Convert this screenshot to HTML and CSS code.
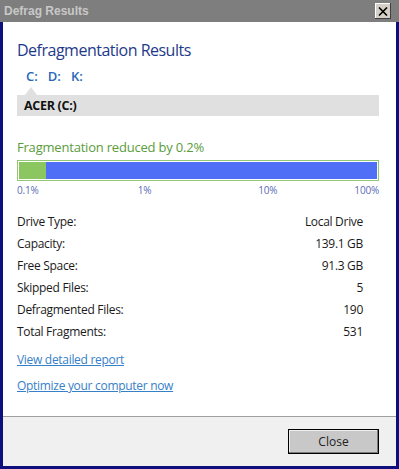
FILE: index.html
```html
<!DOCTYPE html>
<html>
<head>
<meta charset="utf-8">
<link rel="stylesheet" href="styles.css">
</head>
<body>
<div class="window">
  <div class="titlebar">
    <span class="title">Defrag Results</span>
    <span class="xbtn"><svg width="10" height="9" viewBox="0 0 10 9"><path d="M1 0.5 L9 8.5 M9 0.5 L1 8.5" stroke="#000" stroke-width="1.6"/></svg></span>
  </div>
  <div class="client">
    <div class="content">
      <h1 class="heading">Defragmentation Results</h1>
      <div class="tabs">
        <span class="tab">C:</span>
        <span class="tab">D:</span>
        <span class="tab">K:</span>
      </div>
      <div class="pointer"></div>
      <div class="drivebar">ACER (C:)</div>
      <div class="reduced">Fragmentation reduced by 0.2%</div>
      <div class="meter"><div class="fill" style="width:7.5%"></div></div>
      <div class="scale">
        <span>0.1%</span>
        <span>1%</span>
        <span class="last"><span>10%</span><span>100%</span></span>
      </div>
      <div class="stats">
        <span>Drive Type:</span><span class="val">Local Drive</span>
        <span>Capacity:</span><span class="val">139.1 GB</span>
        <span>Free Space:</span><span class="val">91.3 GB</span>
        <span>Skipped Files:</span><span class="val">5</span>
        <span>Defragmented Files:</span><span class="val">190</span>
        <span>Total Fragments:</span><span class="val">531</span>
      </div>
      <div class="links">
        <a class="link" href="#">View detailed report</a>
        <a class="link" href="#">Optimize your computer now</a>
      </div>
    </div>
    <div class="footer">
      <button class="btn">Close</button>
    </div>
  </div>
</div>
</body>
</html>
```

FILE: styles.css
```css
html, body {
  margin: 0;
  padding: 0;
}
body {
  width: 399px;
  height: 469px;
  background: #0e0e7c;
  font-family: "Open Sans", "Noto Sans", sans-serif;
  font-size: 12px;
  letter-spacing: -0.3px;
  color: #1a1a1a;
  overflow: hidden;
}
.window {
  display: flex;
  flex-direction: column;
  height: 469px;
}
.titlebar {
  height: 22px;
  background: #7e7e7e;
  display: flex;
  align-items: center;
  justify-content: space-between;
  padding: 0 8px 0 4px;
  flex: none;
}
.title {
  font-family: "Liberation Sans", Arial, sans-serif;
  font-weight: bold;
  font-size: 12px;
  letter-spacing: 0;
  color: #c8c8c8;
}
.xbtn {
  width: 16px;
  height: 16px;
  background: #d4d0c8;
  box-shadow: inset -1px -1px #404040, inset 1px 1px #ffffff;
  display: flex;
  align-items: center;
  justify-content: center;
}
.client {
  flex: 1;
  margin: 0 3px 3px 3px;
  background: #ffffff;
  display: flex;
  flex-direction: column;
}
.content {
  flex: 1;
  padding: 17px 17px 0 14px;
}
.heading {
  margin: 0;
  font-size: 16px;
  letter-spacing: -0.5px;
  font-weight: normal;
  line-height: 22px;
  color: #1e3a8a;
}
.tabs {
  display: flex;
  gap: 10px;
  margin: 7px 0 0 9px;
  line-height: 16px;
}
.tab {
  font-size: 13px;
  letter-spacing: 0;
  font-weight: 600;
  color: #2868b8;
}
.pointer {
  width: 0;
  height: 0;
  margin: 3px 0 0 8px;
  border-left: 6px solid transparent;
  border-right: 6px solid transparent;
  border-bottom: 8px solid #e0e0e0;
}
.drivebar {
  background: #e0e0e0;
  height: 21px;
  line-height: 21px;
  padding-left: 7px;
  font-weight: bold;
  font-size: 12.5px;
  color: #111;
}
.reduced {
  margin-top: 21px;
  font-size: 13px;
  letter-spacing: -0.2px;
  line-height: 20px;
  color: #5a9c3c;
}
.meter {
  margin-top: 3px;
  border: 1px solid #92c874;
  padding: 1px;
  height: 17px;
  background: #4f6ff6;
  background-clip: content-box;
  display: flex;
}
.fill {
  background: #8cc660;
  height: 100%;
}
.scale {
  display: grid;
  grid-template-columns: 1fr 1fr 1fr;
  font-size: 10px;
  letter-spacing: -0.2px;
  line-height: 14px;
  color: #5a6cb6;
  margin-top: 2px;
}
.scale .last {
  display: flex;
  justify-content: space-between;
}
.stats {
  display: grid;
  grid-template-columns: 1fr auto;
  grid-auto-rows: 22px;
  align-items: center;
  margin-top: 13px;
  padding-right: 16px;
}
.val {
  text-align: right;
}
.links {
  display: flex;
  flex-direction: column;
  align-items: flex-start;
  gap: 10px;
  margin-top: 10px;
}
.link {
  color: #3680c8;
  text-decoration: underline;
  line-height: 16px;
}
.footer {
  flex: none;
  height: 49px;
  border-top: 1px solid #a0a0a0;
  background: #f0f0f0;
  display: flex;
  justify-content: flex-end;
  align-items: flex-start;
  padding-right: 17px;
}
.btn {
  margin-top: 12px;
  width: 91px;
  height: 25px;
  border: 1px solid #000;
  background: #c8c8c8;
  box-shadow: inset -1px -1px #7a7a7a, inset 1px 1px #ededed;
  font-family: "Open Sans", "Noto Sans", sans-serif;
  font-size: 12px;
  color: #222;
  padding: 0;
}
```
